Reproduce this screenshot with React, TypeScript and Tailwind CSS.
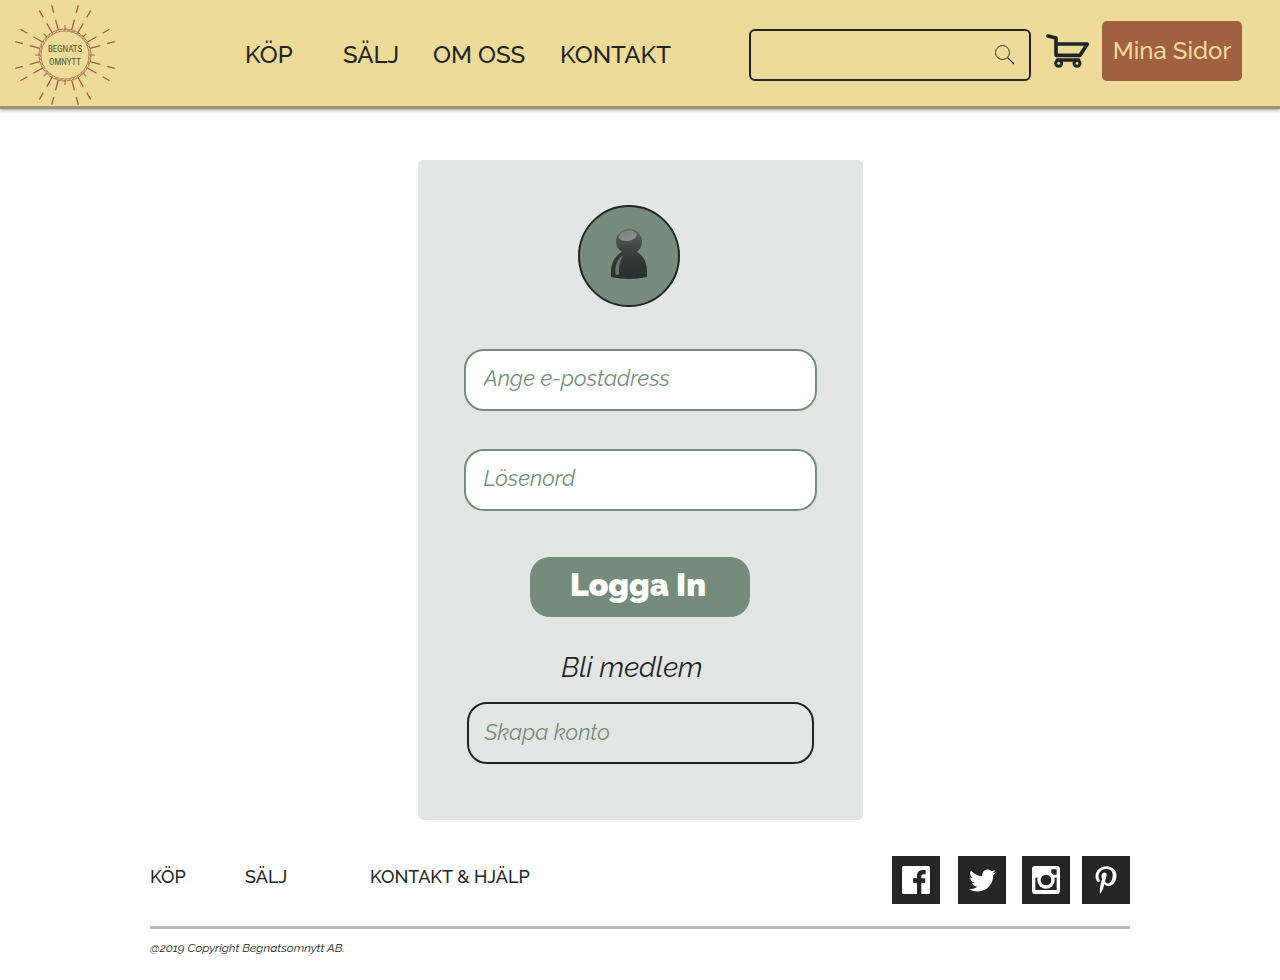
import React from "react";
import { FaPinterestP, FaTwitter } from "react-icons/fa";

const shortRays = [0, 45, 90, 135, 180, 225, 270, 315];
const longRays = [15, 30, 60, 75, 105, 120, 150, 165, 195, 210, 240, 255, 285, 300, 330, 345];
const beads = Array.from({ length: 36 }, (_, i) => i * 10);

function Logo() {
  return (
    <svg className="size-25" viewBox="-50 -50 100 100" role="img" aria-label="Begnats Omnytt">
      <g stroke="#a15f40" fill="none">
        {shortRays.map((a) => (
          <path key={a} d="M25 0H30" strokeWidth="1.2" opacity=".8" transform={`rotate(${a})`} />
        ))}
        {longRays.map((a) => (
          <path key={a} d="M26 0H36.500M43.500 0H51.500" strokeWidth="1.3" transform={`rotate(${a})`} />
        ))}
        <circle r="26" strokeWidth=".8" opacity=".8" />
        <circle r="24" strokeWidth=".8" opacity=".8" />
        {beads.map((a) => (
          <path key={a} d="M24 -2L26 2" strokeWidth=".7" opacity=".8" transform={`rotate(${a})`} />
        ))}
      </g>
      <g
        fill="#55522f"
        fontFamily="'Liberation Sans Narrow', 'Roboto Condensed', 'DejaVu Sans Condensed', sans-serif"
        fontSize="9"
        textAnchor="middle"
      >
        <text y="-3">BEGNATS</text>
        <text y="10">OMNYTT</text>
      </g>
    </svg>
  );
}

function CartIcon() {
  return (
    <svg className="h-[34px] w-[44px]" viewBox="0 0 132 102" fill="none" stroke="#222525" aria-hidden="true">
      <path
        d="M6 6L30 12V64H102L124 30H32"
        strokeWidth="11"
        strokeLinecap="round"
        strokeLinejoin="round"
      />
      <path d="M34 78H98" strokeWidth="10" strokeLinecap="round" />
      <circle cx="38" cy="88" r="9" strokeWidth="9" />
      <circle cx="93" cy="88" r="9" strokeWidth="9" />
    </svg>
  );
}

function SearchIcon() {
  return (
    <svg className="size-5" viewBox="0 0 20 20" fill="none" stroke="#222525" aria-hidden="true">
      <circle cx="7.500" cy="7.500" r="7" strokeWidth=".9" />
      <path d="M12.500 12.500L19 19" strokeWidth="1.200" />
    </svg>
  );
}

function PersonIcon() {
  return (
    <svg className="h-[50px] w-[36px]" viewBox="0 0 108 150" aria-hidden="true">
      <defs>
        <linearGradient id="body" x1="0" y1="0" x2="0" y2="150" gradientUnits="userSpaceOnUse">
          <stop offset="0" stopColor="#5f6664" />
          <stop offset=".35" stopColor="#3f4745" />
          <stop offset=".6" stopColor="#2f3835" />
          <stop offset="1" stopColor="#26302c" />
        </linearGradient>
        <linearGradient id="shine" x1="0" y1="0" x2="0" y2="1">
          <stop offset="0" stopColor="#7a817e" />
          <stop offset="1" stopColor="#8c9190" />
        </linearGradient>
      </defs>
      <path
        d="M54 0C76 0 93 16 93 38C93 51 87 60 78 68C98 80 108 102 108 128V144Q54 156 0 144V128C0 102 12 80 33 68C21 60 15 51 15 38C15 16 32 0 54 0Z"
        fill="url(#body)"
      />
      <ellipse cx="50" cy="20" rx="27" ry="16" fill="url(#shine)" transform="rotate(-8 50 20)" />
      <path d="M38 78C20 88 11 110 13 134Q16 141 24 136C23 112 27 94 38 78Z" fill="#6c7370" />
    </svg>
  );
}

function FacebookIcon() {
  return (
    <svg className="size-7" viewBox="0 0 84 84" aria-hidden="true">
      <rect width="84" height="84" rx="5" fill="#fff" />
      <path d="M45 84V51H33V37H45V30C45 18 52 12 63 12H71V25H65C60 25 58 27 58 32V37H70L69 51H58V84Z" fill="#252525" />
    </svg>
  );
}

function InstagramIcon() {
  return (
    <svg className="size-7" viewBox="0 0 84 84" aria-hidden="true">
      <rect width="84" height="84" rx="10" fill="#fff" />
      <rect x="58" y="10" width="16" height="16" rx="2" fill="#252525" />
      <path d="M10 35H74V72H10Z" fill="#252525" />
      <circle cx="42" cy="42" r="26" fill="#fff" />
      <circle cx="42" cy="42" r="16" fill="#252525" />
    </svg>
  );
}

const socialClass = "flex size-12 items-center justify-center bg-[#252525] text-white";

const fieldClass =
  "h-[62px] w-full rounded-[20px] border-2 border-[#758c7c] bg-white px-[18px] pb-1 text-[22px] italic text-[#222525] outline-none placeholder:text-[#758c7c] placeholder:opacity-100";

export default function App() {
  return (
    <div className="flex min-h-screen flex-col bg-white font-['Raleway','Lato',sans-serif] text-[#222525]">
      <header className="border-b-3 border-[#a09467] bg-[#eedb99] shadow-[0_1px_4px_rgba(0,0,0,0.4)]">
        <div className="flex h-[106px] items-center pr-[38px] pl-[15px] pt-1">
          <a href="#start" className="shrink-0">
            <Logo />
          </a>
          <nav
            aria-label="Huvudmeny"
            className="ml-[130px] grid grid-cols-[98px_90px_127px_auto] text-2xl font-medium whitespace-nowrap"
          >
            <a href="#kop">KÖP</a>
            <a href="#salj">SÄLJ</a>
            <a href="#om-oss">OM OSS</a>
            <a href="#kontakt">KONTAKT</a>
          </nav>
          <div className="ml-auto flex items-center">
            <form
              role="search"
              onSubmit={(e) => e.preventDefault()}
              className="flex h-[52px] w-[282px] items-center rounded-md border-2 border-[#222525] pr-[14px]"
            >
              <input type="search" aria-label="Sök" className="h-full min-w-0 flex-1 bg-transparent px-3 text-xl outline-none" />
              <button type="submit" aria-label="Sök">
                <SearchIcon />
              </button>
            </form>
            <a href="#varukorg" aria-label="Varukorg" className="mb-2 ml-[15px]">
              <CartIcon />
            </a>
            <button
              type="button"
              className="mb-2 ml-3 h-[60px] w-[140px] rounded-[5px] bg-[#a06041] text-2xl font-medium whitespace-nowrap text-[#eedb99]"
            >
              Mina Sidor
            </button>
          </div>
        </div>
      </header>

      <main className="px-4 pt-[51px]">
        <section className="mx-auto flex w-full max-w-[445px] flex-col items-center rounded-[5px] bg-[#e4e6e5] px-[46px] pt-[45px] pb-14">
          <div className="mr-[22px] flex size-[102px] items-center justify-center rounded-full border-2 border-[#222525] bg-[#758c7c] pb-1">
            <PersonIcon />
          </div>
          <form onSubmit={(e) => e.preventDefault()} className="mt-[42px] flex w-full flex-col items-center">
            <input type="email" aria-label="E-postadress" placeholder="Ange e-postadress" className={fieldClass} />
            <input type="password" aria-label="Lösenord" placeholder="Lösenord" className={`mt-[38px] ${fieldClass}`} />
            <button
              type="submit"
              className="mt-[46px] h-[60px] w-[220px] rounded-[20px] bg-[#758c7c] pr-1 pb-1 text-[32px] leading-10 font-black text-white"
            >
              Logga In
            </button>
          </form>
          <h2 className="mt-[31px] mr-4 text-[28px] leading-10 italic">Bli medlem</h2>
          <a
            href="#skapa-konto"
            className="mt-[14px] flex h-[62px] w-[347px] max-w-full items-center rounded-[20px] border-2 border-[#222525] px-4 pb-[2px] text-[22px] text-[#758c7c] italic"
          >
            Skapa konto
          </a>
        </section>
      </main>

      <footer className="mx-auto mt-9 w-full max-w-[980px]">
        <div className="flex justify-between border-b-3 border-[#b9bab9] pb-[22px]">
          <nav
            aria-label="Sidfot"
            className="grid grid-cols-[95px_125px_auto] pt-[7px] text-lg font-medium whitespace-nowrap"
          >
            <a href="#kop">KÖP</a>
            <a href="#salj">SÄLJ</a>
            <a href="#hjalp">KONTAKT &amp; HJÄLP</a>
          </nav>
          <div className="flex">
            <a href="#facebook" aria-label="Facebook" className={socialClass}>
              <FacebookIcon />
            </a>
            <a href="#twitter" aria-label="Twitter" className={`ml-[18px] ${socialClass}`}>
              <FaTwitter className="size-[27px]" />
            </a>
            <a href="#instagram" aria-label="Instagram" className={`ml-4 ${socialClass}`}>
              <InstagramIcon />
            </a>
            <a href="#pinterest" aria-label="Pinterest" className={`ml-3 ${socialClass}`}>
              <FaPinterestP className="size-7" />
            </a>
          </div>
        </div>
        <p className="mt-[11px] text-xs italic">@2019 Copyright Begnatsomnytt AB.</p>
      </footer>
    </div>
  );
}
